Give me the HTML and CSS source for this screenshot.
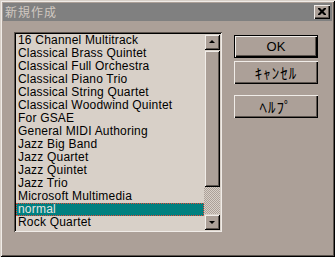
FILE: index.html
```html
<!DOCTYPE html>
<html>
<head>
  <title>新規作成</title>
  <link rel="stylesheet" href="styles.css">
</head>
<body>
  <div class="dialog">
    <div class="titlebar">
      <span class="title">新規作成</span>
      <div class="close">
        <svg width="8" height="7" viewBox="0 0 8 7">
          <path d="M0 0h2l2 2 2-2h2v1l-2.5 2.5L8 6v1H6L4 5 2 7H0V6l2.5-2.5L0 1z" fill="#000"/>
        </svg>
      </div>
    </div>
    <div class="content">
      <div class="listbox">
        <ul class="items">
          <li>16 Channel Multitrack</li>
          <li>Classical Brass Quintet</li>
          <li>Classical Full Orchestra</li>
          <li>Classical Piano Trio</li>
          <li>Classical String Quartet</li>
          <li>Classical Woodwind Quintet</li>
          <li>For GSAE</li>
          <li>General MIDI Authoring</li>
          <li>Jazz Big Band</li>
          <li>Jazz Quartet</li>
          <li>Jazz Quintet</li>
          <li>Jazz Trio</li>
          <li>Microsoft Multimedia</li>
          <li class="selected">normal</li>
          <li>Rock Quartet</li>
        </ul>
        <div class="scrollbar">
          <div class="sb-btn"><span class="arrow up"></span></div>
          <div class="thumb"></div>
          <div class="track"></div>
          <div class="sb-btn"><span class="arrow down"></span></div>
        </div>
      </div>
      <div class="buttons">
        <button class="btn default">OK</button>
        <button class="btn kana">ｷｬﾝｾﾙ</button>
        <button class="btn kana help">ﾍﾙﾌﾟ</button>
      </div>
    </div>
  </div>
</body>
</html>
```

FILE: styles.css
```css
body {
  margin: 0;
  width: 335px;
  height: 257px;
  overflow: hidden;
  font-family: "Liberation Sans", "Noto Sans CJK JP", sans-serif;
  font-size: 12px;
}

.dialog {
  box-sizing: border-box;
  width: 335px;
  height: 257px;
  padding: 3px;
  background: #aca098;
  box-shadow: inset 1px 1px 0 #d8d0c8, inset -1px -1px 0 #000,
    inset 2px 2px 0 #f0ece8, inset -2px -2px 0 #5c544e;
  display: flex;
  flex-direction: column;
}

.titlebar {
  height: 18px;
  background: #808080;
  display: flex;
  align-items: center;
  justify-content: space-between;
  padding: 0 2px 0 2px;
}

.title {
  font-family: "Noto Sans CJK JP", sans-serif;
  font-size: 12px;
  color: #d0c8c0;
  letter-spacing: 1px;
  line-height: 18px;
}

.close {
  box-sizing: border-box;
  width: 16px;
  height: 14px;
  background: #aca098;
  box-shadow: inset 1px 1px 0 #f0ece8, inset -1px -1px 0 #000,
    inset -2px -2px 0 #5c544e;
  display: flex;
  align-items: center;
  justify-content: center;
  padding: 0 1px 1px 0;
}

.content {
  display: flex;
  padding: 11px 0 0 11px;
}

.listbox {
  box-sizing: border-box;
  width: 208px;
  height: 200px;
  padding: 2px;
  background: #d8d0c8;
  box-shadow: inset 1px 1px 0 #5c544e, inset -1px -1px 0 #f0ece8,
    inset 2px 2px 0 #000, inset -2px -2px 0 #d8d0c8;
  display: flex;
}

.items {
  list-style: none;
  margin: 0;
  padding: 0;
  flex: 1;
  overflow: hidden;
}

.items li {
  height: 13px;
  line-height: 13px;
  padding-left: 2px;
  color: #000;
  letter-spacing: 0.2px;
  white-space: nowrap;
}

.items li.selected {
  box-sizing: border-box;
  background: #008080;
  color: #e8e4e0;
  outline: 1px dotted #e04838;
  outline-offset: -1px;
}

.scrollbar {
  width: 16px;
  display: flex;
  flex-direction: column;
}

.sb-btn, .thumb {
  box-sizing: border-box;
  background: #aca098;
  box-shadow: inset 1px 1px 0 #d8d0c8, inset -1px -1px 0 #000,
    inset 2px 2px 0 #f0ece8, inset -2px -2px 0 #5c544e;
}

.sb-btn {
  height: 16px;
  display: flex;
  align-items: center;
  justify-content: center;
}

.thumb {
  height: 137px;
}

.track {
  flex: 1;
  background-color: #d8d0c8;
  background-image: repeating-conic-gradient(#aca098 0 25%, #d8d0c8 0 50%);
  background-size: 2px 2px;
}

.arrow {
  width: 0;
  height: 0;
  border-left: 3px solid transparent;
  border-right: 3px solid transparent;
}

.arrow.up {
  border-bottom: 3px solid #000;
  margin-bottom: 1px;
}

.arrow.down {
  border-top: 3px solid #000;
  margin-top: 1px;
}

.buttons {
  display: flex;
  flex-direction: column;
  margin: 3px 0 0 12px;
}

.btn {
  box-sizing: border-box;
  width: 84px;
  height: 23px;
  margin: 0 0 3px 0;
  padding: 0;
  border: 0;
  background: #aca098;
  font-family: "Liberation Sans", "Noto Sans CJK JP", sans-serif;
  font-size: 13px;
  color: #000;
  box-shadow: inset 1px 1px 0 #f0ece8, inset -1px -1px 0 #000,
    inset -2px -2px 0 #5c544e;
}

.btn.default {
  box-shadow: inset 0 0 0 1px #000, inset 2px 2px 0 #f0ece8,
    inset -2px -2px 0 #000, inset -3px -3px 0 #5c544e;
}

.btn.kana {
  font-family: "Noto Sans CJK JP", sans-serif;
  font-size: 15px;
  letter-spacing: 1px;
}

.btn.help {
  margin-top: 8px;
}
```
